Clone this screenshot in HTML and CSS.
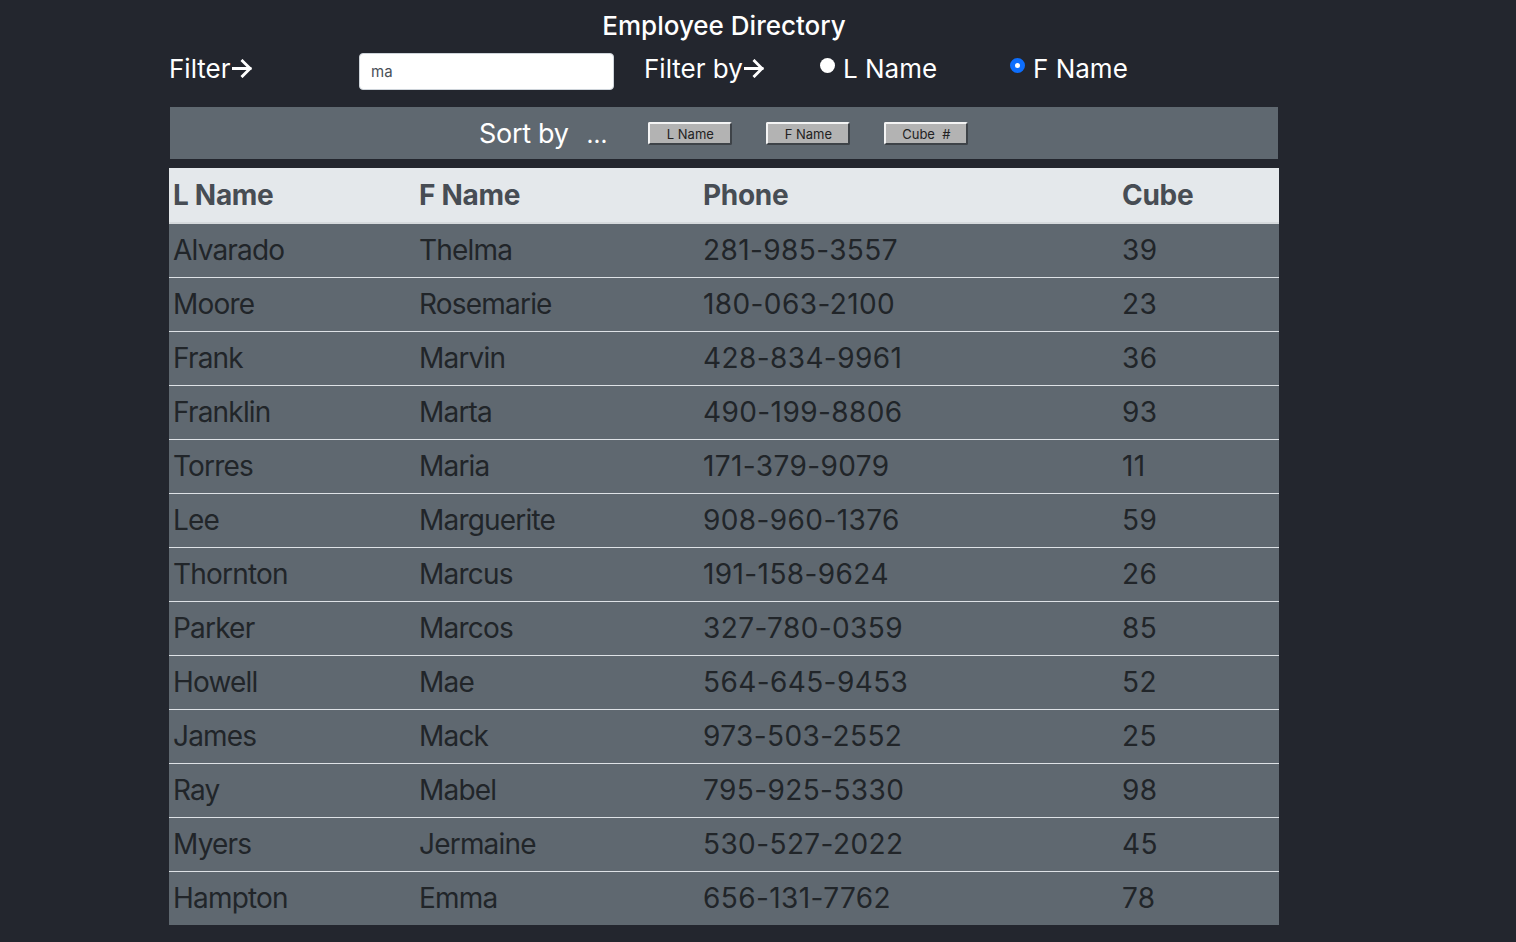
FILE: index.html
```html
<!DOCTYPE html>
<html>
<head>
<meta charset="utf-8">
<link rel="stylesheet" href="styles.css">
</head>
<body>
<div class="page">
  <h1 class="title">Employee Directory</h1>
  <div class="filter-row">
    <div class="lbl lbl-filter">Filter<svg class="arrow" viewBox="0 0 22 20"><path d="M1 10H19M11 2L19 10L11 18" fill="none" stroke="#fff" stroke-width="3" stroke-linecap="square"/></svg></div>
    <input class="filter-input" type="text" value="ma">
    <div class="lbl lbl-by">Filter by<svg class="arrow" viewBox="0 0 22 20"><path d="M1 10H19M11 2L19 10L11 18" fill="none" stroke="#fff" stroke-width="3" stroke-linecap="square"/></svg></div>
    <label class="radio radio-l"><span class="dot"></span>L Name</label>
    <label class="radio radio-f"><span class="dot checked"></span>F Name</label>
  </div>
  <div class="sort-bar">
    <span class="sort-label">Sort by</span>
    <span class="sort-dots">...</span>
    <button class="sort-btn">L Name</button>
    <button class="sort-btn">F Name</button>
    <button class="sort-btn">Cube &nbsp;#</button>
  </div>
  <table class="dir">
    <thead>
      <tr><th class="c1">L Name</th><th class="c2">F Name</th><th class="c3">Phone</th><th class="c4">Cube</th></tr>
    </thead>
    <tbody>
      <tr><td>Alvarado</td><td>Thelma</td><td class="num">281-985-3557</td><td class="num">39</td></tr>
      <tr><td>Moore</td><td>Rosemarie</td><td class="num">180-063-2100</td><td class="num">23</td></tr>
      <tr><td>Frank</td><td>Marvin</td><td class="num">428-834-9961</td><td class="num">36</td></tr>
      <tr><td>Franklin</td><td>Marta</td><td class="num">490-199-8806</td><td class="num">93</td></tr>
      <tr><td>Torres</td><td>Maria</td><td class="num">171-379-9079</td><td class="num">11</td></tr>
      <tr><td>Lee</td><td>Marguerite</td><td class="num">908-960-1376</td><td class="num">59</td></tr>
      <tr><td>Thornton</td><td>Marcus</td><td class="num">191-158-9624</td><td class="num">26</td></tr>
      <tr><td>Parker</td><td>Marcos</td><td class="num">327-780-0359</td><td class="num">85</td></tr>
      <tr><td>Howell</td><td>Mae</td><td class="num">564-645-9453</td><td class="num">52</td></tr>
      <tr><td>James</td><td>Mack</td><td class="num">973-503-2552</td><td class="num">25</td></tr>
      <tr><td>Ray</td><td>Mabel</td><td class="num">795-925-5330</td><td class="num">98</td></tr>
      <tr><td>Myers</td><td>Jermaine</td><td class="num">530-527-2022</td><td class="num">45</td></tr>
      <tr><td>Hampton</td><td>Emma</td><td class="num">656-131-7762</td><td class="num">78</td></tr>
    </tbody>
  </table>
</div>
</body>
</html>
```
FILE: styles.css
```css
html, body {
  margin: 0;
  padding: 0;
  background: #23262e;
  font-family: Inter, "Noto Sans", "Liberation Sans", sans-serif;
  color: #ffffff;
  overflow: hidden;
}
.page {
  margin-left: 169px;
  width: 1110px;
}
.title {
  margin: 0;
  padding-top: 10px;
  height: 32px;
  font-size: 26px;
  font-weight: 500;
  line-height: 32px;
  text-align: center;
  color: #fff;
}
.filter-row {
  display: flex;
  align-items: center;
  height: 59px;
  margin-bottom: 6px;
}
.lbl {
  font-size: 26px;
  font-weight: 400;
  display: flex;
  align-items: center;
  margin-top: -6px;
}
.arrow {
  width: 21px;
  height: 19px;
  margin-left: 1px;
}
.lbl-filter { width: 190px; }
.filter-input {
  box-sizing: border-box;
  width: 255px;
  height: 37px;
  border: 1px solid #ced4da;
  border-radius: 4px;
  padding: 0 11px;
  font-family: Inter, "Noto Sans", sans-serif;
  font-size: 15px;
  color: #495057;
  background: #fff;
  margin-right: 30px;
}
.lbl-by { width: 176px; }
.radio {
  display: flex;
  align-items: center;
  font-size: 26px;
  margin-top: -6px;
}
.radio-l { width: 190px; }
.dot {
  width: 15px;
  height: 15px;
  border-radius: 50%;
  background: #fff;
  margin-right: 8px;
  margin-top: -6px;
  box-sizing: border-box;
}
.dot.checked {
  background: #fff;
  border: 5px solid #0d6efd;
}
.sort-bar {
  margin-left: 1px;
  width: 1108px;
  height: 52px;
  background: #5f6870;
  display: flex;
  align-items: center;
  box-sizing: border-box;
  padding-left: 309px;
}
.sort-label {
  font-size: 27px;
  color: #fff;
  letter-spacing: -0.3px;
}
.sort-dots {
  font-size: 24px;
  color: #fff;
  margin-left: 18px;
  margin-right: 41px;
  margin-top: 2px;
}
.sort-btn {
  box-sizing: border-box;
  height: 23px;
  padding: 0;
  background: #b3b3b3;
  border-style: solid;
  border-width: 2px;
  border-color: #f4f4f4 #3e4348 #3e4348 #f4f4f4;
  border-radius: 2px;
  font-family: Inter, "Noto Sans", sans-serif;
  font-size: 13px;
  color: #222;
  width: 84px;
  margin-right: 34px;
  margin-top: 1px;
}
.dir {
  margin-top: 9px;
  width: 1110px;
  border-collapse: collapse;
  table-layout: fixed;
}
.dir th, .dir td {
  text-align: left;
  padding: 0 0 0 4px;
  font-size: 28px;
  height: 54px;
  box-sizing: border-box;
}
.dir th {
  background: #e4e8eb;
  color: #474d54;
  font-weight: 700;
  height: 55px;
  border-bottom: 2px solid #d6dadd;
  letter-spacing: -0.3px;
}
.dir td {
  background: #5f6870;
  color: #212529;
  font-weight: 400;
  border-top: 1px solid #dee2e6;
  letter-spacing: -0.8px;
}
.dir td.num { letter-spacing: 0.4px; }
.dir tbody tr:first-child td { border-top: none; }
.c1 { width: 246px; }
.c2 { width: 284px; }
.c3 { width: 419px; }
.c4 { width: 161px; }
```
